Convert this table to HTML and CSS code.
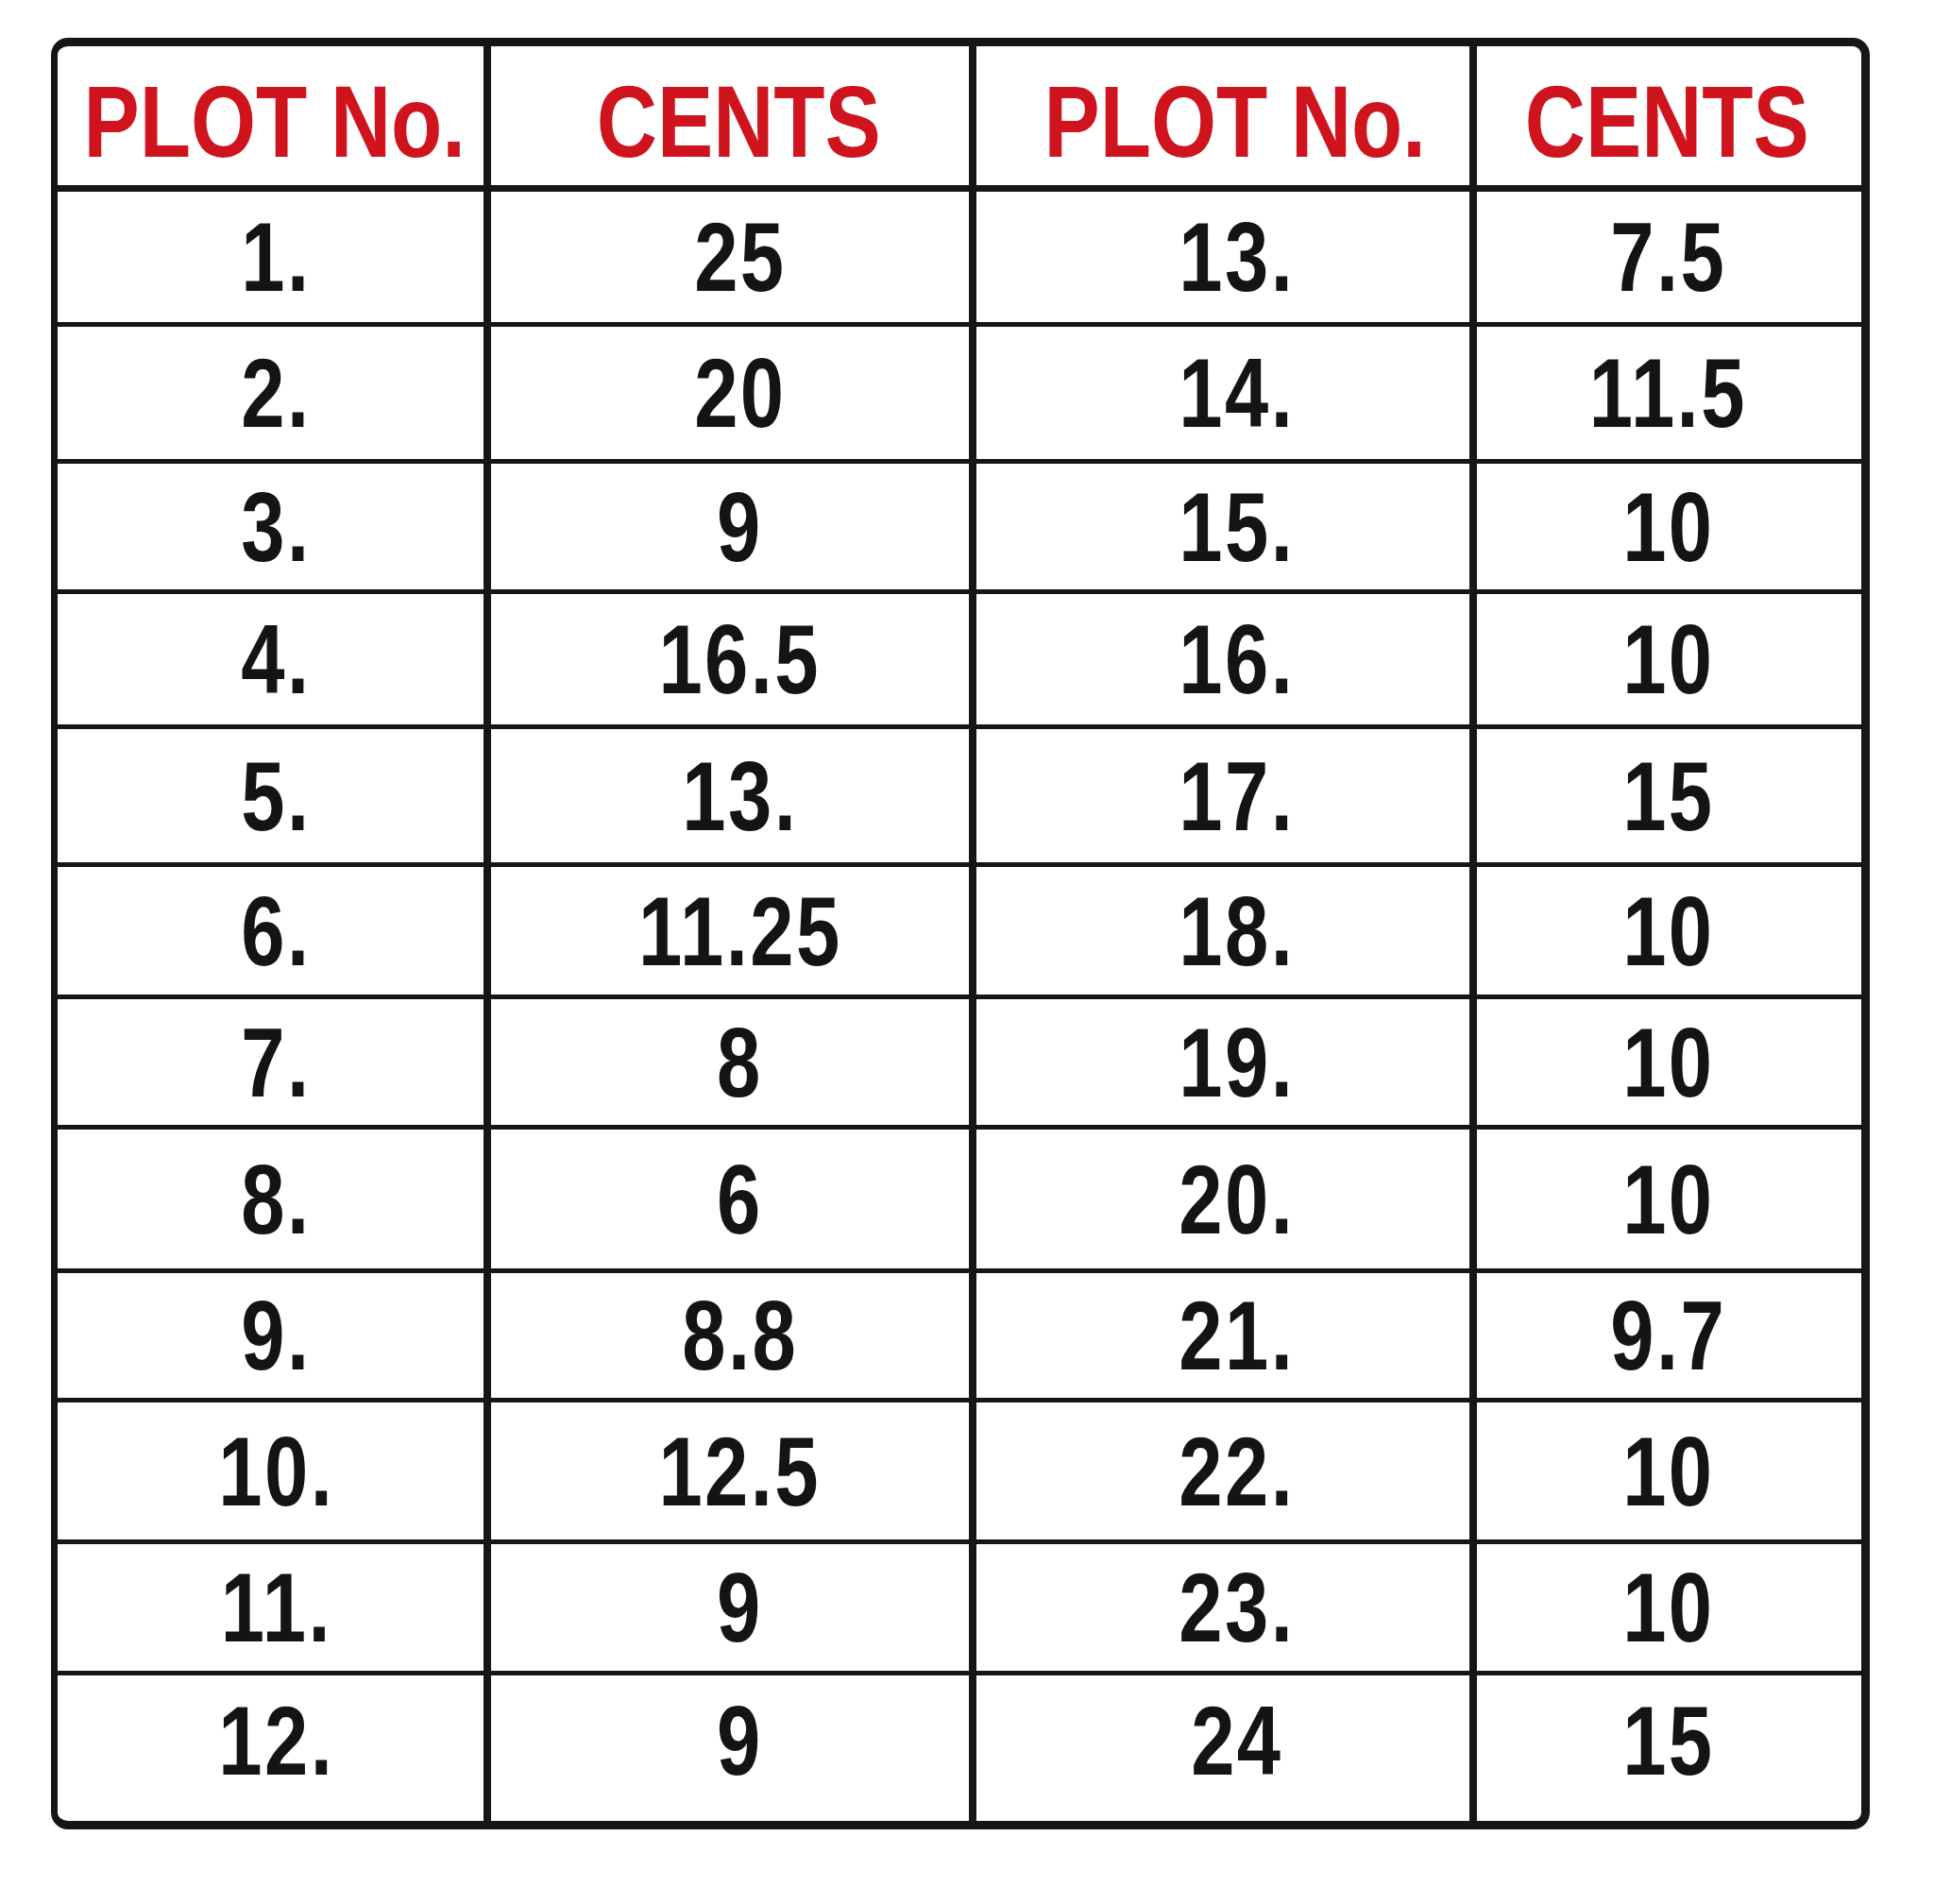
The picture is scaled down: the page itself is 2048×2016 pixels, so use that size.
FILE: index.html
```html
<!DOCTYPE html>
<html lang="en">
<head>
<meta charset="utf-8">
<title>Plot sizes</title>
<link rel="stylesheet" href="styles.css">
</head>
<body>
<div class="sheet">
  <div class="cell head c1"><span>PLOT No.</span></div>
  <div class="cell head c2"><span>CENTS</span></div>
  <div class="cell head c3"><span>PLOT No.</span></div>
  <div class="cell head c4"><span>CENTS</span></div>

  <div class="cell c1"><span>1.</span></div><div class="cell c2"><span>25</span></div><div class="cell c3"><span>13.</span></div><div class="cell c4"><span>7.5</span></div>
  <div class="cell c1"><span>2.</span></div><div class="cell c2"><span>20</span></div><div class="cell c3"><span>14.</span></div><div class="cell c4"><span>11.5</span></div>
  <div class="cell c1"><span>3.</span></div><div class="cell c2"><span>9</span></div><div class="cell c3"><span>15.</span></div><div class="cell c4"><span>10</span></div>
  <div class="cell c1"><span>4.</span></div><div class="cell c2"><span>16.5</span></div><div class="cell c3"><span>16.</span></div><div class="cell c4"><span>10</span></div>
  <div class="cell c1"><span>5.</span></div><div class="cell c2"><span>13.</span></div><div class="cell c3"><span>17.</span></div><div class="cell c4"><span>15</span></div>
  <div class="cell c1"><span>6.</span></div><div class="cell c2"><span>11.25</span></div><div class="cell c3"><span>18.</span></div><div class="cell c4"><span>10</span></div>
  <div class="cell c1"><span>7.</span></div><div class="cell c2"><span>8</span></div><div class="cell c3"><span>19.</span></div><div class="cell c4"><span>10</span></div>
  <div class="cell c1"><span>8.</span></div><div class="cell c2"><span>6</span></div><div class="cell c3"><span>20.</span></div><div class="cell c4"><span>10</span></div>
  <div class="cell c1"><span>9.</span></div><div class="cell c2"><span>8.8</span></div><div class="cell c3"><span>21.</span></div><div class="cell c4"><span>9.7</span></div>
  <div class="cell c1"><span>10.</span></div><div class="cell c2"><span>12.5</span></div><div class="cell c3"><span>22.</span></div><div class="cell c4"><span>10</span></div>
  <div class="cell c1"><span>11.</span></div><div class="cell c2"><span>9</span></div><div class="cell c3"><span>23.</span></div><div class="cell c4"><span>10</span></div>
  <div class="cell c1 last"><span>12.</span></div><div class="cell c2 last"><span>9</span></div><div class="cell c3 last"><span>24</span></div><div class="cell c4 last"><span>15</span></div>
</div>
</body>
</html>
```

FILE: styles.css
```css
html, body {
  margin: 0;
  padding: 0;
  background: #ffffff;
}

body {
  width: 2048px;
  height: 2016px;
  padding: 40px 0 0 54px;
  box-sizing: border-box;
  font-family: "Liberation Sans", Arial, sans-serif;
}

.sheet {
  width: 1926px;
  box-sizing: border-box;
  border-style: solid;
  border-color: #161616;
  border-width: 9px 9px 9px 7px;
  border-radius: 18px;
  overflow: hidden;
  background: #161616;
  display: grid;
  grid-template-columns: 451px 506px 522px 407px;
  grid-template-rows: 149px 138px 140px 133px 138px 141px 135px 133px 147px 132px 145px 134px 154px;
  column-gap: 8px;
  row-gap: 5px;
}

.cell {
  background: #ffffff;
  display: flex;
  align-items: center;
  justify-content: center;
  font-size: 104px;
  font-weight: 700;
  line-height: 1;
  color: #141414;
  box-sizing: border-box;
  white-space: nowrap;
}

.cell span {
  display: inline-block;
  transform: scaleX(0.8);
  transform-origin: 50% 50%;
  letter-spacing: 3px;
  margin-right: -3px;
}

.head {
  border-bottom: 2px solid #161616;
  color: #cf141d;
  font-size: 107px;
  padding-top: 14px;
}

.head span {
  transform: scaleX(0.83);
  letter-spacing: 0;
  margin-right: 0;
}

.last {
  padding-bottom: 16px;
}

.c1 { padding-left: 9px; }
.c2 { padding-left: 18px; }
.c3 { padding-left: 26px; }
.c4 { padding-right: 5px; }
```
